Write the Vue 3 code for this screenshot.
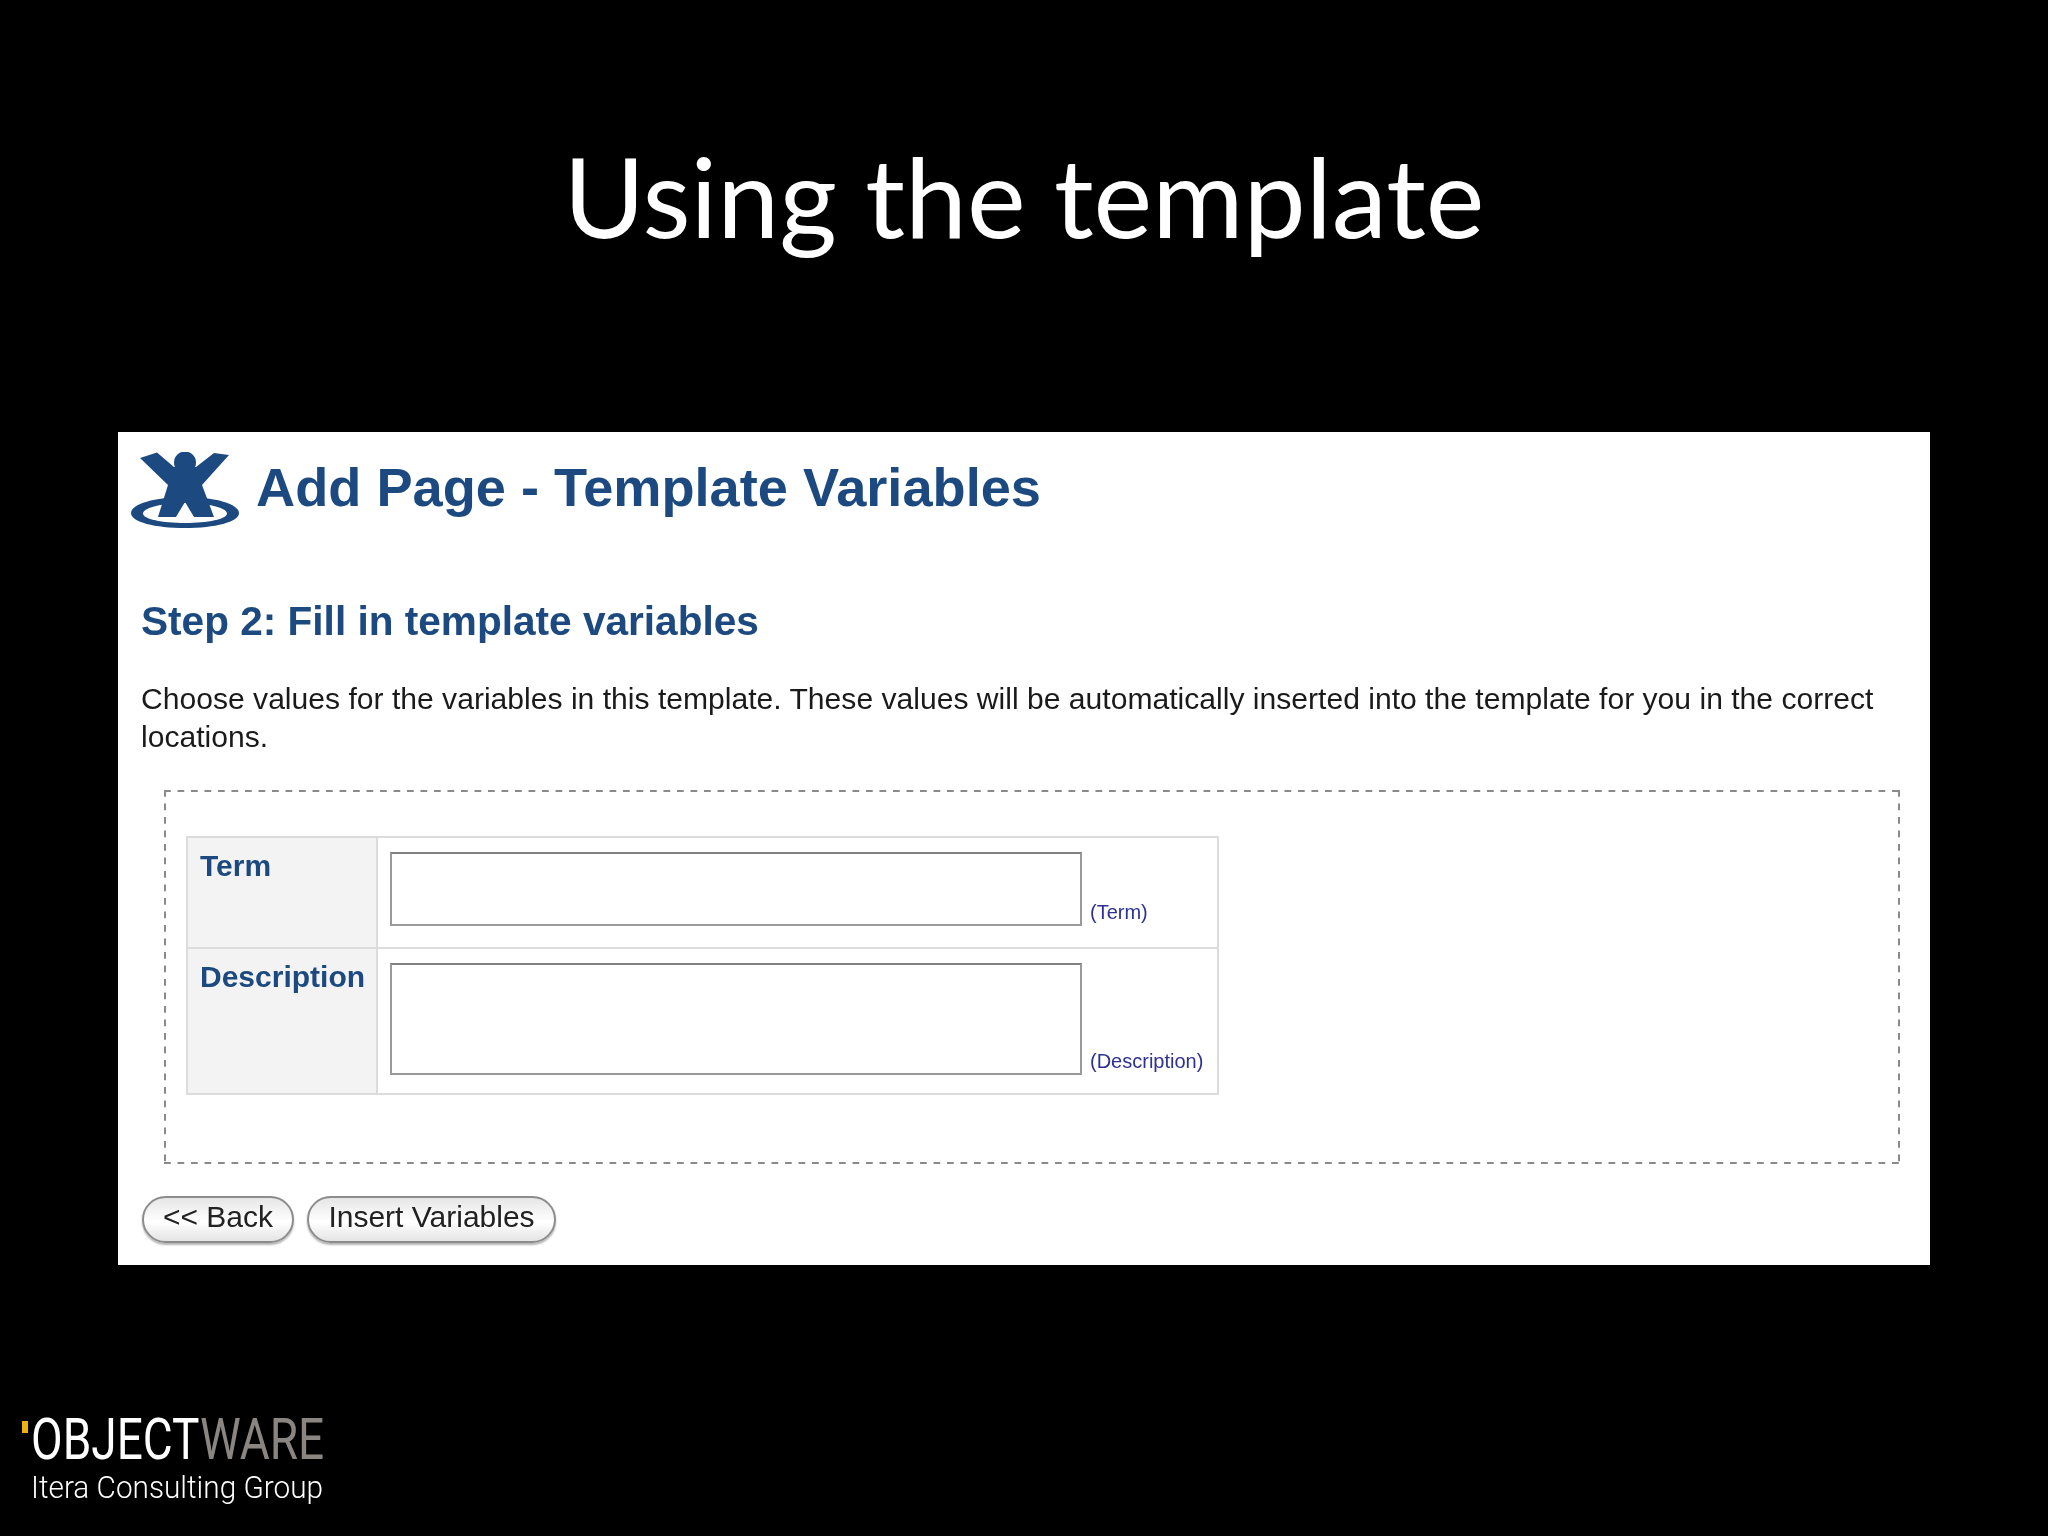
<script setup>
const fields = [
  { name: 'Term', hint: '(Term)', tall: false },
  { name: 'Description', hint: '(Description)', tall: true }
]
</script>

<template>
  <div class="slide">
    <h1 class="slide__title">Using the template</h1>

    <section class="panel">
      <header class="panel__head">
        <svg class="panel__logo" viewBox="0 0 110 78" aria-hidden="true">
          <path fill-rule="evenodd" d="M1 61C1 52 25 45 55 45s54 7 54 16-24 15-54 15S1 70 1 61ZM13 61.500c0 5.500 19 9.500 42 9.500s42-4 42-9.500-19-10.500-42-10.500-42 5-42 10.500Z" />
          <circle cx="55" cy="10.500" r="11" />
          <path d="M10 6 27 0.500 44 15 H66 L84 1 99 3 72 33 84 65 H64 L55 50 46 65 H28 L38 33Z" />
          <path class="panel__gap" d="M55 51 46 66 44 69 H66 L64 66Z" />
        </svg>
        <h2 class="panel__heading">Add Page - Template Variables</h2>
      </header>

      <h3 class="panel__step">Step 2: Fill in template variables</h3>
      <p class="panel__text">Choose values for the variables in this template. These values will be automatically inserted into the template for you in the correct locations.</p>

      <div class="vars">
        <table class="vars__table">
          <tr v-for="field in fields" :key="field.name">
            <th class="vars__label">{{ field.name }}</th>
            <td class="vars__cell" :class="{ 'vars__cell--tall': field.tall }">
              <div class="vars__row">
                <textarea v-if="field.tall" class="vars__input vars__input--tall"></textarea>
                <input v-else class="vars__input" type="text">
                <span class="vars__hint">{{ field.hint }}</span>
              </div>
            </td>
          </tr>
        </table>
      </div>

      <div class="actions">
        <button class="actions__btn actions__btn--back" type="button">&lt;&lt; Back</button>
        <button class="actions__btn actions__btn--insert" type="button">Insert Variables</button>
      </div>
    </section>

    <footer class="brand">
      <div class="brand__mark"><i class="brand__tick"></i><span class="brand__name">OBJECT<b>WARE</b></span></div>
      <div class="brand__sub">Itera Consulting Group</div>
    </footer>
  </div>
</template>

<style>
body {
  background: #000;
}
</style>

<style scoped>
.slide {
  width: 2048px;
  height: 1536px;
  overflow: hidden;
  background: #000;
  display: flex;
  flex-direction: column;
}

.slide__title {
  margin: 0;
  height: 432px;
  padding-top: 125px;
  box-sizing: border-box;
  text-align: center;
  color: #fff;
  font: 400 111px/140px Lato, sans-serif;
  filter: blur(0.5px);
}

.panel {
  width: 1812px;
  height: 833px;
  margin-left: 118px;
  box-sizing: border-box;
  padding: 20px 12px 0 12px;
  background: #fff;
  font-family: "Liberation Sans", Arial, sans-serif;
  filter: blur(0.7px);
}

.panel__head {
  display: flex;
  align-items: flex-start;
  gap: 16px;
}

.panel__logo {
  width: 110px;
  height: 78px;
  fill: #1c4a80;
  flex: none;
}

.panel__gap {
  fill: #fff;
}

.panel__heading {
  margin: 5px 0 0;
  color: #1c4a80;
  font-size: 54.2px;
  line-height: 60px;
  font-weight: 700;
}

.panel__step {
  margin: 68px 0 0 11px;
  color: #1c4a80;
  font-size: 40.6px;
  line-height: 46px;
  font-weight: 700;
}

.panel__text {
  margin: 36px 0 0 11px;
  color: #1a1a1a;
  font-size: 30.1px;
  line-height: 38px;
  width: 1770px;
}

/* dashes are wider than what border: dashed gives at 2px */
.vars {
  margin: 34px 18px 0 34px;
  height: 374px;
  box-sizing: border-box;
  padding: 46px 22px 0;
  background:
    linear-gradient(to right, #8a8a8a 7px, transparent 7px) left top / 13.500px 2px repeat-x,
    linear-gradient(to right, #8a8a8a 7px, transparent 7px) left bottom / 13.500px 2px repeat-x,
    linear-gradient(to bottom, #8a8a8a 7px, transparent 7px) left top / 2px 13.500px repeat-y,
    linear-gradient(to bottom, #8a8a8a 7px, transparent 7px) right top / 2px 13.500px repeat-y;
}

.vars__table {
  border-collapse: collapse;
  width: 1033px;
  table-layout: fixed;
}

.vars__label {
  width: 190px;
  box-sizing: border-box;
  border: 2px solid #dcdcdc;
  background: #f3f3f4;
  padding: 10px 12px 0;
  vertical-align: top;
  text-align: left;
  color: #1c4a80;
  font-size: 30px;
  line-height: 36px;
  font-weight: 700;
  white-space: nowrap;
}

.vars__cell {
  border: 2px solid #dcdcdc;
  padding: 14px 0 21px 12px;
}

.vars__cell--tall {
  padding-bottom: 18px;
}

.vars__row {
  display: flex;
  align-items: flex-end;
  gap: 8px;
}

.vars__input {
  display: block;
  width: 692px;
  height: 74px;
  margin: 0;
  padding: 0;
  box-sizing: border-box;
  border: 2px solid #9a9a9a;
  border-top-color: #808080;
  border-radius: 0;
  background: #fff;
  outline: none;
  resize: none;
}

.vars__input--tall {
  height: 112px;
}

.vars__hint {
  color: #2e3192;
  font-size: 20px;
  line-height: 24px;
  white-space: nowrap;
  margin-bottom: 2px;
}

.actions {
  display: flex;
  gap: 13px;
  margin: 32px 0 0 12px;
}

.actions__btn {
  height: 47px;
  margin: 0;
  padding: 0 0 7px;
  border: 2px solid #8c8c8c;
  border-radius: 24px;
  background: linear-gradient(#e6e6e6, #fff 55%, #e4e4e4);
  box-shadow: 0 2px 2px #b5b5b5;
  color: #222;
  font: 400 30px/38px "Liberation Sans", Arial, sans-serif;
}

.actions__btn--back {
  width: 152px;
}

.actions__btn--insert {
  width: 249px;
}

.brand {
  margin: 151px 0 0 31px;
  width: 291px;
  color: #fff;
  filter: blur(0.5px);
}

.brand__mark {
  position: relative;
  height: 48px;
  font: 400 57px/48px Roboto, sans-serif;
  white-space: nowrap;
}

.brand__tick {
  position: absolute;
  left: -9px;
  top: 5px;
  width: 6px;
  height: 12px;
  background: #eeb111;
}

.brand__name {
  display: inline-block;
  transform: scaleX(0.807);
  transform-origin: left center;
}

.brand__name b {
  font-weight: 400;
  color: #8b8581;
}

.brand__sub {
  margin-top: 3px;
  font: 300 32px/40px Roboto, sans-serif;
  white-space: nowrap;
  transform: scaleX(0.93);
  transform-origin: left center;
}
</style>
